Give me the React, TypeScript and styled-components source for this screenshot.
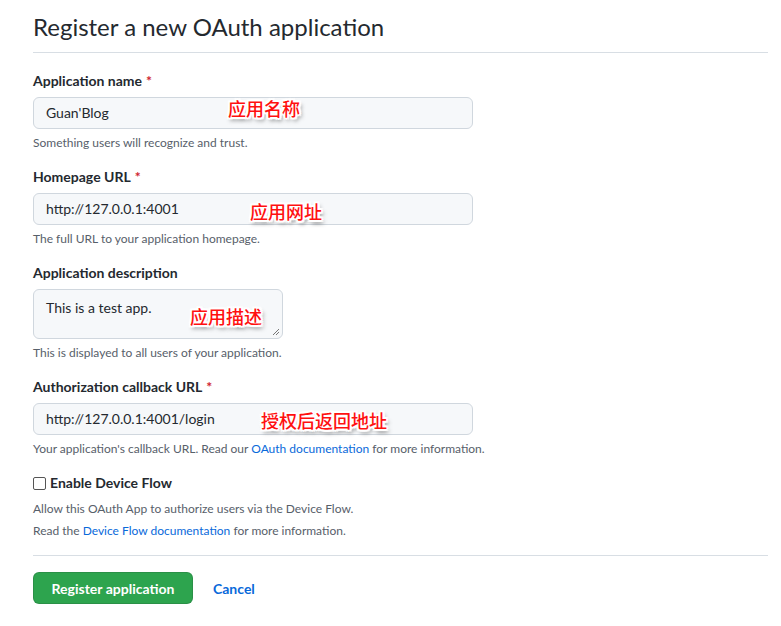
import React from "react"
import styled, { createGlobalStyle } from "styled-components"

const GlobalStyle = createGlobalStyle`
  body {
    margin: 0;
    background: #ffffff;
    font-family: Lato, "Noto Sans", "Liberation Sans", sans-serif;
    color: #24292f;
  }
`

const Page = styled.div`
  width: 735px;
  padding-left: 33px;
`

const Header = styled.div`
  padding: 12px 0 10px;
  border-bottom: 1px solid #d8dee4;
`

const Title = styled.h1`
  margin: 0;
  font-size: 24px;
  line-height: 30px;
  font-weight: 400;
  color: #24292f;
`

const Form = styled.form`
  display: flex;
  flex-direction: column;
  gap: 14px;
  padding-top: 18px;
`

const Field = styled.div`
  display: flex;
  flex-direction: column;
`

const Label = styled.label`
  font-size: 14px;
  line-height: 20px;
  font-weight: 700;
  color: #24292f;
`

const Required = styled.span`
  color: #cf222e;
  margin-left: 4px;
`

const InputWrap = styled.div`
  position: relative;
  margin-top: 6px;
`

const TextInput = styled.div`
  box-sizing: border-box;
  width: 440px;
  height: 32px;
  padding: 5px 12px;
  font-size: 14px;
  line-height: 20px;
  background: #f6f8fa;
  border: 1px solid #d0d7de;
  border-radius: 6px;
  color: #24292f;
`

const TextArea = styled.div`
  position: relative;
  box-sizing: border-box;
  width: 250px;
  height: 50px;
  padding: 8px 12px;
  font-size: 14px;
  line-height: 20px;
  background: #f6f8fa;
  border: 1px solid #d0d7de;
  border-radius: 6px;
  color: #24292f;
`

const Grip = styled.svg`
  position: absolute;
  right: 2px;
  bottom: 2px;
`

const Note = styled.p<{ $tight?: boolean }>`
  margin: ${(p) => (p.$tight ? "0" : "4px 0 0")};
  font-size: 12px;
  line-height: ${(p) => (p.$tight ? "22px" : "20px")};
  color: #57606a;
`

const Link = styled.a`
  color: #0969da;
  text-decoration: none;
`

const Annotation = styled.span<{ $left: number; $top: number }>`
  position: absolute;
  left: ${(p) => p.$left}px;
  top: ${(p) => p.$top}px;
  font-family: "Noto Sans CJK SC", sans-serif;
  font-size: 18px;
  font-weight: 500;
  line-height: 22px;
  color: #ff1010;
  white-space: nowrap;
  text-shadow:
    -1px -1px 0 #fff, 1px -1px 0 #fff, -1px 1px 0 #fff, 1px 1px 0 #fff,
    0 -2px 0 #fff, 0 2px 0 #fff, -2px 0 0 #fff, 2px 0 0 #fff,
    -2px -2px 1px #fff, 2px -2px 1px #fff, -2px 2px 1px #fff, 2px 2px 1px #fff,
    2px 3px 4px rgba(0, 0, 0, 0.7);
`

const CheckRow = styled.label`
  display: flex;
  align-items: center;
  gap: 4px;
  font-size: 14px;
  line-height: 20px;
  font-weight: 700;
`

const CheckBox = styled.span`
  box-sizing: border-box;
  width: 13px;
  height: 13px;
  border: 1px solid #555;
  border-radius: 2px;
  background: #fff;
`

const DeviceNotes = styled.div`
  margin-top: 5px;
`

const Footer = styled.div`
  margin-top: 13px;
  border-top: 1px solid #d8dee4;
  padding-top: 16px;
  display: flex;
  align-items: center;
  gap: 20px;
`

const PrimaryButton = styled.button`
  box-sizing: border-box;
  height: 32px;
  width: 160px;
  padding: 0 16px;
  white-space: nowrap;
  font-family: inherit;
  font-size: 14px;
  font-weight: 700;
  color: #ffffff;
  background: #2da44e;
  border: 1px solid rgba(27, 31, 36, 0.15);
  border-radius: 6px;
`

const CancelLink = styled.a`
  font-size: 14px;
  font-weight: 700;
  color: #0969da;
  text-decoration: none;
`

export default function App() {
  return (
    <Page>
      <GlobalStyle />
      <Header>
        <Title>Register a new OAuth application</Title>
      </Header>
      <Form>
        <Field>
          <Label>
            Application name<Required>*</Required>
          </Label>
          <InputWrap>
            <TextInput>Guan'Blog</TextInput>
            <Annotation $left={195} $top={0}>应用名称</Annotation>
          </InputWrap>
          <Note>Something users will recognize and trust.</Note>
        </Field>
        <Field>
          <Label>
            Homepage URL<Required>*</Required>
          </Label>
          <InputWrap>
            <TextInput>http://127.0.0.1:4001</TextInput>
            <Annotation $left={217} $top={7}>应用网址</Annotation>
          </InputWrap>
          <Note>The full URL to your application homepage.</Note>
        </Field>
        <Field>
          <Label>Application description</Label>
          <InputWrap>
            <TextArea>
              This is a test app.
              <Grip width="8" height="8" viewBox="0 0 8 8">
                <path d="M7 1 L1 7 M7 4 L4 7" stroke="#777" strokeWidth="1" fill="none" />
              </Grip>
            </TextArea>
            <Annotation $left={157} $top={16}>应用描述</Annotation>
          </InputWrap>
          <Note>This is displayed to all users of your application.</Note>
        </Field>
        <Field>
          <Label>
            Authorization callback URL<Required>*</Required>
          </Label>
          <InputWrap>
            <TextInput>http://127.0.0.1:4001/login</TextInput>
            <Annotation $left={228} $top={6}>授权后返回地址</Annotation>
          </InputWrap>
          <Note>
            Your application's callback URL. Read our <Link href="#">OAuth documentation</Link> for more
            information.
          </Note>
        </Field>
        <Field>
          <CheckRow>
            <CheckBox />
            Enable Device Flow
          </CheckRow>
          <DeviceNotes>
            <Note $tight>Allow this OAuth App to authorize users via the Device Flow.</Note>
            <Note $tight>
              Read the <Link href="#">Device Flow documentation</Link> for more information.
            </Note>
          </DeviceNotes>
        </Field>
      </Form>
      <Footer>
        <PrimaryButton type="button">Register application</PrimaryButton>
        <CancelLink href="#">Cancel</CancelLink>
      </Footer>
    </Page>
  )
}
